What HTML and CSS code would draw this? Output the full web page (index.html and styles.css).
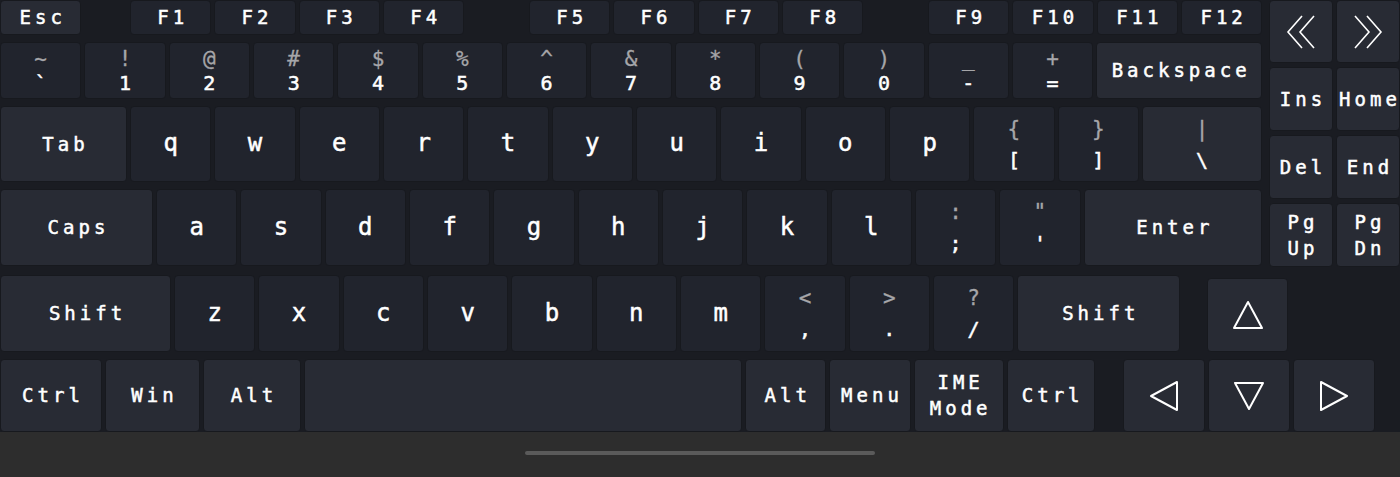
FILE: index.html
```html
<!DOCTYPE html>
<html lang="en">

<head>
    <meta charset="UTF-8">
    <title>Keyboard</title>
    <link rel="stylesheet" href="styles.css">
</head>

<body>
    <div class="keyboard">
        <div class="top">
            <div class="main">
                <!-- function row -->
                <div class="row fn-row">
                    <div class="key mod"><span class="lbl">Esc</span></div>
                    <div class="key gap-a"><span class="lbl">F1</span></div>
                    <div class="key"><span class="lbl">F2</span></div>
                    <div class="key"><span class="lbl">F3</span></div>
                    <div class="key"><span class="lbl">F4</span></div>
                    <div class="key gap-b"><span class="lbl">F5</span></div>
                    <div class="key"><span class="lbl">F6</span></div>
                    <div class="key"><span class="lbl">F7</span></div>
                    <div class="key"><span class="lbl">F8</span></div>
                    <div class="key gap-b"><span class="lbl">F9</span></div>
                    <div class="key"><span class="lbl">F10</span></div>
                    <div class="key"><span class="lbl">F11</span></div>
                    <div class="key"><span class="lbl">F12</span></div>
                </div>

                <!-- number row -->
                <div class="row num-row">
                    <div class="key dual"><span class="sh">~</span><span class="ch">`</span></div>
                    <div class="key dual"><span class="sh">!</span><span class="ch">1</span></div>
                    <div class="key dual"><span class="sh">@</span><span class="ch">2</span></div>
                    <div class="key dual"><span class="sh">#</span><span class="ch">3</span></div>
                    <div class="key dual"><span class="sh">$</span><span class="ch">4</span></div>
                    <div class="key dual"><span class="sh">%</span><span class="ch">5</span></div>
                    <div class="key dual"><span class="sh">^</span><span class="ch">6</span></div>
                    <div class="key dual"><span class="sh">&amp;</span><span class="ch">7</span></div>
                    <div class="key dual"><span class="sh">*</span><span class="ch">8</span></div>
                    <div class="key dual"><span class="sh">(</span><span class="ch">9</span></div>
                    <div class="key dual"><span class="sh">)</span><span class="ch">0</span></div>
                    <div class="key dual"><span class="sh">_</span><span class="ch">-</span></div>
                    <div class="key dual"><span class="sh">+</span><span class="ch">=</span></div>
                    <div class="key mod fill"><span class="lbl">Backspace</span></div>
                </div>

                <!-- tab row -->
                <div class="row">
                    <div class="key mod tab"><span class="lbl">Tab</span></div>
                    <div class="key letter">q</div>
                    <div class="key letter">w</div>
                    <div class="key letter">e</div>
                    <div class="key letter">r</div>
                    <div class="key letter">t</div>
                    <div class="key letter">y</div>
                    <div class="key letter">u</div>
                    <div class="key letter">i</div>
                    <div class="key letter">o</div>
                    <div class="key letter">p</div>
                    <div class="key dual tall"><span class="sh">{</span><span class="ch">[</span></div>
                    <div class="key dual tall"><span class="sh">}</span><span class="ch">]</span></div>
                    <div class="key mod dual tall fill"><span class="sh">|</span><span class="ch">\</span></div>
                </div>

                <!-- caps row -->
                <div class="row">
                    <div class="key mod caps"><span class="lbl">Caps</span></div>
                    <div class="key letter">a</div>
                    <div class="key letter">s</div>
                    <div class="key letter">d</div>
                    <div class="key letter">f</div>
                    <div class="key letter">g</div>
                    <div class="key letter">h</div>
                    <div class="key letter">j</div>
                    <div class="key letter">k</div>
                    <div class="key letter">l</div>
                    <div class="key dual tall"><span class="sh">:</span><span class="ch">;</span></div>
                    <div class="key dual tall"><span class="sh">"</span><span class="ch">'</span></div>
                    <div class="key mod fill"><span class="lbl">Enter</span></div>
                </div>
            </div>

            <div class="side">
                <div class="key mod">
                    <svg width="32" height="36" viewBox="0 0 32 36"><path d="M17 2 L3 18 L17 34 M29 2 L15 18 L29 34" fill="none" stroke="#fff" stroke-width="1.6"/></svg>
                </div>
                <div class="key mod">
                    <svg width="32" height="36" viewBox="0 0 32 36"><path d="M3 2 L17 18 L3 34 M15 2 L29 18 L15 34" fill="none" stroke="#fff" stroke-width="1.6"/></svg>
                </div>
                <div class="key mod"><span class="lbl">Ins</span></div>
                <div class="key mod"><span class="lbl">Home</span></div>
                <div class="key mod"><span class="lbl">Del</span></div>
                <div class="key mod"><span class="lbl">End</span></div>
                <div class="key mod two"><span class="lbl">Pg</span><span class="lbl">Up</span></div>
                <div class="key mod two"><span class="lbl">Pg</span><span class="lbl">Dn</span></div>
            </div>
        </div>

        <div class="bottom">
            <!-- shift row -->
            <div class="row shift-row">
                <div class="key mod lshift"><span class="lbl">Shift</span></div>
                <div class="key letter">z</div>
                <div class="key letter">x</div>
                <div class="key letter">c</div>
                <div class="key letter">v</div>
                <div class="key letter">b</div>
                <div class="key letter">n</div>
                <div class="key letter">m</div>
                <div class="key dual tall"><span class="sh">&lt;</span><span class="ch">,</span></div>
                <div class="key dual tall"><span class="sh">&gt;</span><span class="ch">.</span></div>
                <div class="key dual tall"><span class="sh">?</span><span class="ch">/</span></div>
                <div class="key mod rshift"><span class="lbl">Shift</span></div>
                <div class="key mod arrow up">
                    <svg width="32" height="30" viewBox="0 0 32 30"><path d="M16 2 L30 28 L2 28 Z" fill="none" stroke="#fff" stroke-width="2" stroke-linejoin="round"/></svg>
                </div>
            </div>

            <!-- ctrl row -->
            <div class="row ctrl-row">
                <div class="key mod lctrl"><span class="lbl">Ctrl</span></div>
                <div class="key mod win"><span class="lbl">Win</span></div>
                <div class="key mod lalt"><span class="lbl">Alt</span></div>
                <div class="key mod space"></div>
                <div class="key mod"><span class="lbl">Alt</span></div>
                <div class="key mod"><span class="lbl">Menu</span></div>
                <div class="key mod two ime"><span class="lbl">IME</span><span class="lbl">Mode</span></div>
                <div class="key mod rctrl"><span class="lbl">Ctrl</span></div>
                <div class="key mod arrow left">
                    <svg width="30" height="32" viewBox="0 0 30 32"><path d="M2 16 L28 2 L28 30 Z" fill="none" stroke="#fff" stroke-width="2" stroke-linejoin="round"/></svg>
                </div>
                <div class="key mod arrow">
                    <svg width="32" height="30" viewBox="0 0 32 30"><path d="M2 2 L30 2 L16 28 Z" fill="none" stroke="#fff" stroke-width="2" stroke-linejoin="round"/></svg>
                </div>
                <div class="key mod arrow">
                    <svg width="30" height="32" viewBox="0 0 30 32"><path d="M2 2 L28 16 L2 30 Z" fill="none" stroke="#fff" stroke-width="2" stroke-linejoin="round"/></svg>
                </div>
            </div>
        </div>
    </div>

    <div class="navbar">
        <div class="handle"></div>
    </div>
</body>

</html>
```

FILE: styles.css
```css
body {
    margin: 0;
    padding: 0;
    background-color: #2d2d2d;
    font-family: "DejaVu Sans Mono", "Liberation Mono", monospace;
    color: #fff;
}

.keyboard {
    height: 432px;
    background-color: #1a1c22;
    --u: 84.33px;
}

.top {
    display: flex;
    gap: 7px;
}

.main {
    width: 1262px;
    display: flex;
    flex-direction: column;
    gap: 7px;
}

.row {
    display: flex;
    gap: 3px;
}

.fn-row {
    height: 35px;
}

.num-row {
    height: 57px;
}

.main .row:nth-child(3) {
    height: 76px;
}

.main .row:nth-child(4) {
    height: 77px;
}

.key {
    box-sizing: border-box;
    width: calc(var(--u) - 3px);
    flex: none;
    background-color: #21242d;
    border: 1px solid #17191e;
    border-radius: 4px;
    display: flex;
    align-items: center;
    justify-content: center;
}

.key.mod {
    background-color: #282b34;
}

.lbl {
    font-size: 19px;
    letter-spacing: 4px;
    margin-right: -4px;
    line-height: 1;
    -webkit-text-stroke: 0.5px #fff;
}

.gap-a {
    margin-left: 45.67px;
}

.gap-b {
    margin-left: 61.7px;
}

.fill {
    flex: 1;
}

.letter {
    font-size: 24px;
    -webkit-text-stroke: 0.5px #fff;
    padding-bottom: 2px;
}

.dual {
    flex-direction: column;
    gap: 3px;
    line-height: 1;
}

.dual .sh {
    color: #a6a6a9;
    font-size: 21px;
    -webkit-text-stroke: 0.3px #a6a6a9;
}

.dual .ch {
    font-size: 20px;
    -webkit-text-stroke: 0.5px #fff;
}

.dual.tall {
    gap: 10px;
}

.tab {
    width: 127px;
}

.caps {
    width: 153px;
}

.side {
    flex: 1;
    display: grid;
    grid-template-columns: 1fr 1fr;
    grid-template-rows: 63px 64px 64px 64px;
    gap: 4px 3px;
}

.side .key {
    width: auto;
}

.two {
    flex-direction: column;
    gap: 7px;
}

.bottom {
    margin-top: 8px;
    display: flex;
    flex-direction: column;
    gap: 7px;
}

.shift-row {
    height: 77px;
}

.ctrl-row {
    height: 73px;
}

.lshift {
    width: 171px;
}

.rshift {
    width: 163px;
}

.arrow {
    width: 82px;
}

.up {
    margin-left: 24px;
    margin-top: 3px;
    width: 81px;
}

.lctrl {
    width: 102px;
}

.win {
    width: 95px;
}

.lalt {
    width: 98px;
}

.space {
    width: 438px;
}

.ime {
    width: 90px;
}

.rctrl {
    width: 88px;
}

.left {
    margin-left: 25px;
}

.navbar {
    height: 45px;
    display: flex;
    justify-content: center;
    padding-top: 19px;
    box-sizing: border-box;
}

.handle {
    width: 350px;
    height: 4px;
    border-radius: 2px;
    background-color: #5a5a5a;
}
```
